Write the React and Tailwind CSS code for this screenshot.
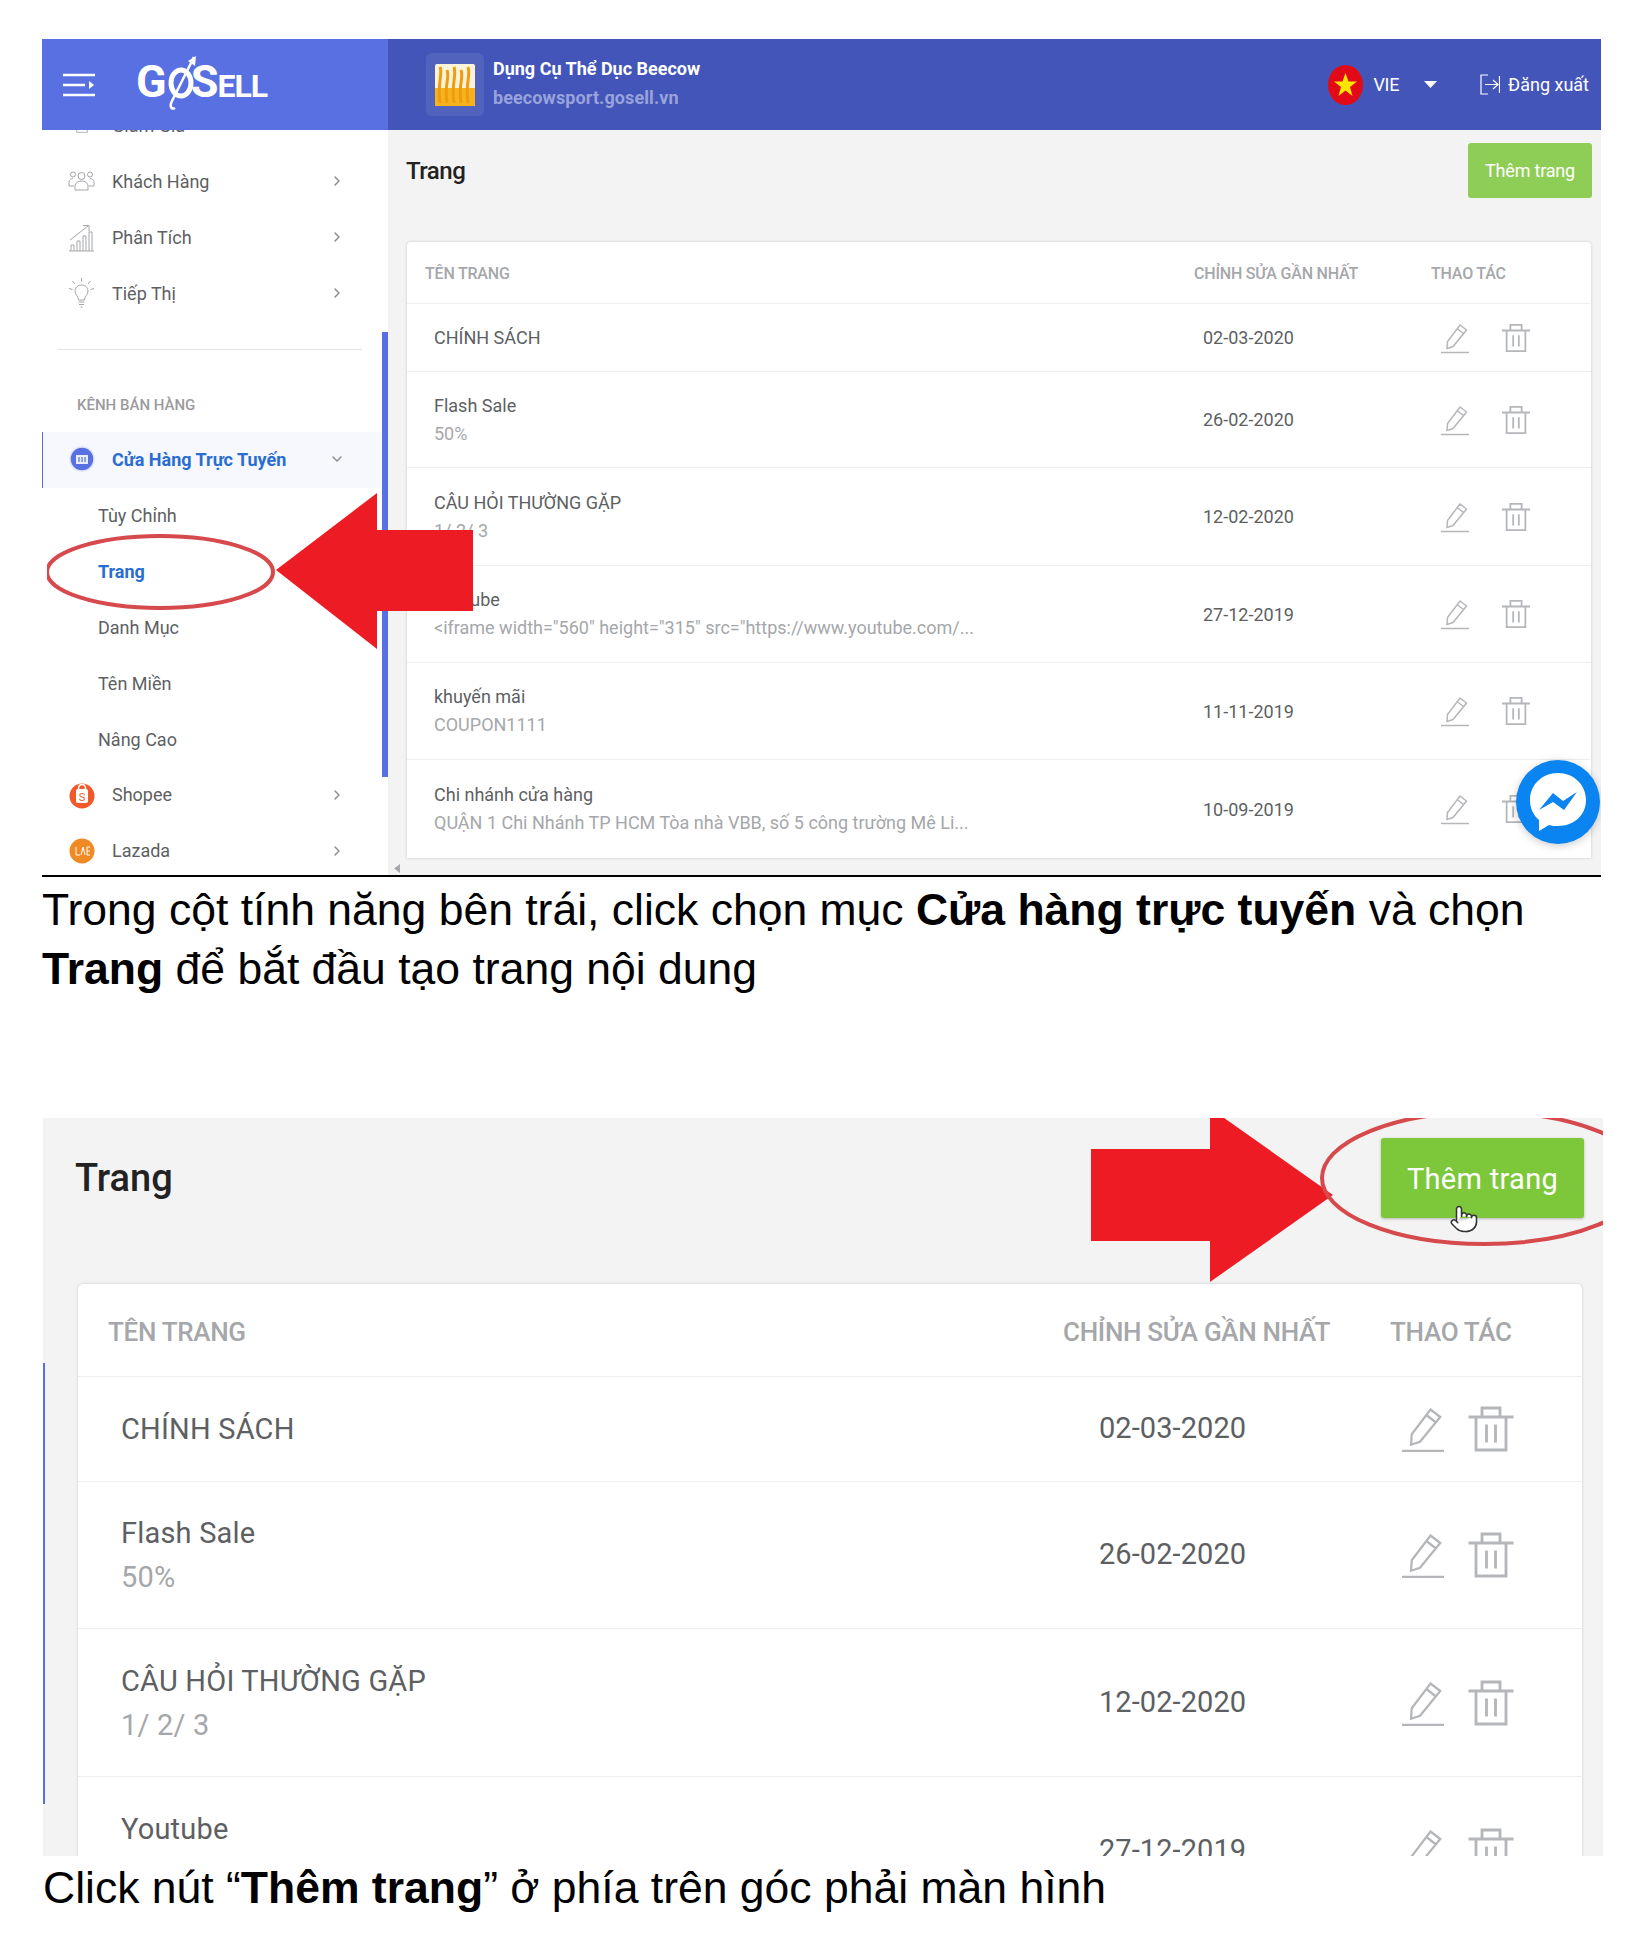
import { ChevronRight, ChevronDown, Pointer } from 'lucide-react';

const ROWS_TOP = [
  { name: 'CHÍNH SÁCH', sub: '', date: '02-03-2020', h: 'h-[68px]' },
  { name: 'Flash Sale', sub: '50%', date: '26-02-2020', h: 'h-[96px]' },
  { name: 'CÂU HỎI THƯỜNG GẶP', sub: '1/ 2/ 3', date: '12-02-2020', h: 'h-[98px]' },
  { name: 'Youtube', sub: '<iframe width="560" height="315" src="https://www.youtube.com/...', date: '27-12-2019', h: 'h-[97px]' },
  { name: 'khuyến mãi', sub: 'COUPON1111', date: '11-11-2019', h: 'h-[97px]' },
  { name: 'Chi nhánh cửa hàng', sub: 'QUẬN 1 Chi Nhánh TP HCM Tòa nhà VBB, số 5 công trường Mê Li...', date: '10-09-2019', h: 'h-[98px]' },
];

const ROWS_BOTTOM = [
  { name: 'CHÍNH SÁCH', sub: '', date: '02-03-2020', h: 'h-[105px]' },
  { name: 'Flash Sale', sub: '50%', date: '26-02-2020', h: 'h-[147px]' },
  { name: 'CÂU HỎI THƯỜNG GẶP', sub: '1/ 2/ 3', date: '12-02-2020', h: 'h-[148px]' },
  { name: 'Youtube', sub: '<iframe width="560" height="315"', date: '27-12-2019', h: 'h-[148px]' },
];

const SUB_MENU = ['Tùy Chỉnh', 'Trang', 'Danh Mục', 'Tên Miền', 'Nâng Cao'];

const PencilIcon = ({ className }) => (
  <svg className={className} viewBox="0 0 32 32" fill="none" stroke="#b4b6ba" strokeWidth="1.5">
    <path d="M21 3l6.500 5L14 24.500l-6 2 .5-7z" />
    <path d="M18 6.500l6.500 5" />
    <path d="M2 30.500h28" />
  </svg>
);

const TrashIcon = ({ className }) => (
  <svg className={className} viewBox="0 0 32 32" fill="none" stroke="#b4b6ba" strokeWidth="1.900">
    <path d="M1 8h30M10 8V2h12v6M6 8v22h20V8M13 13v12M19 13v12" />
  </svg>
);

const GroupIcon = ({ className }) => (
  <svg className={className} viewBox="0 0 27 22" fill="none" stroke="#a3a5a9" strokeWidth="1">
    <circle cx="13.500" cy="6" r="3.500" />
    <circle cx="5" cy="4.500" r="2.500" />
    <circle cx="22" cy="4.500" r="2.500" />
    <path d="M7 20v-4c0-3 3-5 6.500-5s6.500 2 6.500 5v4zM6 16H1v-4c0-2 2-3.500 4-3.500M21 16h5v-4c0-2-2-3.500-4-3.500" />
  </svg>
);

const ChartIcon = () => (
  <svg className="w-[27px] h-[29px]" viewBox="0 0 27 29" fill="none" stroke="#a3a5a9" strokeWidth="1">
    <path d="M1 28h25M3 28v-6h3v6M9 28v-10h3v10M15 28V13h3v15M21 28V9h3v19M2 17L20 3M15 2.500h6v6" />
  </svg>
);

const BulbIcon = () => (
  <svg className="w-[27px] h-[30px]" viewBox="0 0 27 30" fill="none" stroke="#a3a5a9" strokeWidth="1">
    <path d="M13.500 7c-4 0-6.500 3-6.500 6 0 4 3.500 5 3.500 9h6c0-4 3.500-5 3.500-9 0-3-2.500-6-6.500-6zM10.500 24h6M11 26.500h5M12.500 29h2" />
    <path d="M13.500 0v3.500M4.500 3l2.500 3M22.500 3L20 6M1 10.500l3.500 1M26 10.500l-3.500 1" />
  </svg>
);

const MenuRow = ({ icon, label, chevron = true }) => (
  <div className="h-[56px] flex items-center pl-[26px] pr-[43px] shrink-0">
    <div className="w-[27px] flex justify-center">{icon}</div>
    <span className="ml-[17px] flex-1 text-[18px] text-[#5d5f63]">{label}</span>
    {chevron && <ChevronRight size={16} strokeWidth={2.200} color="#8b8d91" />}
  </div>
);

const App = () => (
  <div className="relative bg-white h-[1955px] pt-[39px] font-['Roboto',sans-serif] overflow-hidden">
    {/* First screenshot */}
    <div className="relative ml-[42px] w-[1559px] h-[838px] overflow-hidden">
      <div className="flex h-[91px]">
        <div className="w-[346px] bg-[#5970e2] flex items-center pl-[21px]">
          <svg className="w-[32px] h-[24px]" viewBox="0 0 32 24" fill="none" stroke="#fff" strokeWidth="2.400">
            <path d="M0 2h32M0 12h22M0 22h32" />
            <path d="M26 8l5 4-5 4z" fill="#fff" stroke="none" />
          </svg>
          <div className="relative ml-[41px] -mt-[6px] flex items-baseline text-white font-bold leading-none">
            <span className="text-[45px]">G</span>
            <span className="w-[24px]" />
            <span className="text-[45px] tracking-[-1px]">S</span>
            <span className="text-[32px] tracking-[-1px]">ELL</span>
            <svg className="absolute left-[29px] -top-[4px] w-[32px] h-[56px]" viewBox="0 0 32 56" fill="none" stroke="#fff">
              <ellipse cx="16" cy="28" rx="10" ry="13" strokeWidth="5" />
              <path d="M29 2L7 46c-3 6 0 9 3 7" strokeWidth="2.500" />
              <path d="M23 6l8-5-1 10z" fill="#fff" stroke="none" />
            </svg>
          </div>
        </div>
        <div className="flex-1 bg-[#4355b8] flex items-center pl-[38px] pr-[12px]">
          <div className="w-[58px] h-[63px] rounded-md bg-[#5263bd] flex items-center justify-center">
            <svg className="w-[40px] h-[42px]" viewBox="0 0 40 42">
              <rect width="40" height="42" rx="2" fill="#fdf3d8" />
              <rect y="24" width="40" height="18" fill="#f6b31c" />
              <path d="M5 3c3 8-3 16 0 36M12 6c3 8-3 14 0 33M19 3c3 8-3 16 0 36M26 6c3 8-3 14 0 33M33 3c3 8-3 16 0 36" fill="none" stroke="#ee9c10" strokeWidth="3" />
            </svg>
          </div>
          <div className="ml-[9px] -mt-[2px] flex flex-col gap-[5px]">
            <span className="text-[18px] leading-[24px] font-bold text-white">Dụng Cụ Thể Dục Beecow</span>
            <span className="text-[18px] leading-[24px] font-bold tracking-[0.1px] text-[#98a3dc]">beecowsport.gosell.vn</span>
          </div>
          <div className="flex-1" />
          <svg className="w-[35px] h-[40px]" viewBox="0 0 35 40">
            <ellipse cx="17.500" cy="20" rx="17.500" ry="20" fill="#e30a17" />
            <path d="M17.500 8l3 8.500h8.500l-7 5.500 2.500 9-7-5.500-7 5.500 2.500-9-7-5.500h8.500z" fill="#ffe500" />
          </svg>
          <span className="ml-[10px] text-[18px] tracking-[-0.3px] text-white">VIE</span>
          <svg className="ml-[25px] w-[13px] h-[7px]" viewBox="0 0 13 7"><path d="M0 0h13L6.500 7z" fill="#fff" /></svg>
          <svg className="ml-[43px] w-[20px] h-[21px]" viewBox="0 0 20 21" fill="none" stroke="#fff" strokeWidth="1.200">
            <path d="M8 1H1v19h7M5 10.500h13M13 6l5 4.500-5 4.500M19.500 2v17" />
          </svg>
          <span className="ml-[8px] text-[18px] text-white">Đăng xuất</span>
        </div>
      </div>

      <div className="flex h-[747px]">
        <aside className="relative w-[346px] bg-white overflow-hidden shrink-0">
          <div className="-mt-[33px] flex flex-col">
            <MenuRow label="Giảm Giá" chevron={false} icon={<GroupIcon className="w-[22px] h-[20px]" />} />
            <MenuRow label="Khách Hàng" icon={<GroupIcon className="w-[27px] h-[22px]" />} />
            <MenuRow label="Phân Tích" icon={<ChartIcon />} />
            <MenuRow label="Tiếp Thị" icon={<BulbIcon />} />
            <div className="mt-[28px] ml-[16px] w-[304px] border-t border-[#e3e4e6]" />
            <div className="mt-[45px] pl-[35px] text-[15px] leading-[20px] font-medium text-[#9a9b9e]">KÊNH BÁN HÀNG</div>
            <div className="mt-[17px] h-[56px] pb-[2px] flex items-center pl-[25px] pr-[43px] bg-[#f6f8fe] border-l border-[#5970e2]">
              <div className="w-[27px] flex justify-center">
                <svg className="w-[26px] h-[26px]" viewBox="0 0 26 26">
                  <circle cx="13" cy="13" r="12" fill="#5970e2" stroke="#dfe4fa" strokeWidth="1.500" />
                  <path d="M7 9h12v9H7z" fill="#e9ecfb" />
                  <path d="M10 11v5M13 11v5M16 11v5" stroke="#5970e2" strokeWidth="1.200" />
                </svg>
              </div>
              <span className="ml-[17px] flex-1 text-[18px] font-bold text-[#2a6dd0]">Cửa Hàng Trực Tuyến</span>
              <ChevronDown size={16} strokeWidth={2.200} color="#8b8d91" />
            </div>
            {SUB_MENU.map((item) => (
              <div key={item} className="h-[55.8px] flex items-center pl-[56px] shrink-0">
                <span className={item === 'Trang' ? 'text-[18px] font-bold text-[#2a6dd0]' : 'text-[18px] text-[#5d5f63]'}>{item}</span>
              </div>
            ))}
            <MenuRow label="Shopee" icon={(
              <svg className="w-[26px] h-[30px]" viewBox="0 0 26 30">
                <circle cx="13" cy="16" r="12.500" fill="#f1592a" />
                <rect x="7" y="9" width="12" height="14" rx="2" fill="#fff" />
                <path d="M9.500 9c0-6 7-6 7 0" fill="none" stroke="#fff" strokeWidth="1.500" />
                <text x="13" y="21" textAnchor="middle" fontSize="11" fill="#f1592a">S</text>
              </svg>
            )} />
            <MenuRow label="Lazada" icon={(
              <svg className="w-[26px] h-[26px]" viewBox="0 0 26 26">
                <circle cx="13" cy="13" r="12.500" fill="#f08a24" />
                <path d="M7 9v8h4M14 9l-2 8M14 9l2 8M21 9h-3v8h3M18 13h3" fill="none" stroke="#fff" strokeWidth="1" />
              </svg>
            )} />
          </div>
          <div className="absolute right-0 top-[202px] w-[6px] h-[445px] bg-[#5970e2]" />
        </aside>

        <main className="relative flex-1 bg-[#f3f3f3] pl-[18px] pr-[9px]">
          <div className="flex items-center justify-between pt-[13px]">
            <h1 className="text-[24px] font-medium tracking-[-0.5px] text-[#222]">Trang</h1>
            <button className="w-[124px] h-[55px] rounded-[3px] bg-[#8fce56] text-[18px] tracking-[-0.2px] text-white">Thêm trang</button>
          </div>
          <div className="mt-[44px] ml-[1px] w-[1184px] bg-white rounded-t-[4px] shadow-[0_0_3px_rgba(0,0,0,0.18)]">
            <div className="flex items-center h-[62px] pt-[2px] border-b border-[#eeeeee] text-[16px] font-medium tracking-[-0.2px] text-[#a5a7aa]">
              <div className="flex-1 pl-[18px]">TÊN TRANG</div>
              <div className="w-[237px]">CHỈNH SỬA GẦN NHẤT</div>
              <div className="w-[160px]">THAO TÁC</div>
            </div>
            {ROWS_TOP.map((row, i) => (
              <div key={row.date} className={`flex items-center ${row.h} ${i < 5 ? 'border-b border-[#eeeeee]' : ''}`}>
                <div className="flex-1 pl-[27px] text-[18px] leading-[28px] text-[#5d5f63]">
                  <div>{row.name}</div>
                  {row.sub && <div className="text-[#a5a7aa]">{row.sub}</div>}
                </div>
                <div className="w-[237px] pl-[9px] text-[18px] text-[#5d5f63]">{row.date}</div>
                <div className="w-[160px] flex items-center pl-[8px] gap-[30px]">
                  <PencilIcon className="w-[32px] h-[32px]" />
                  <TrashIcon className="w-[30px] h-[30px]" />
                </div>
              </div>
            ))}
          </div>
          <svg className="absolute left-[6px] bottom-[4px] w-[6px] h-[9px]" viewBox="0 0 6 9"><path d="M6 0v9L0 4.500z" fill="#a5a7aa" /></svg>
        </main>
      </div>

      {/* Annotations drawn over the screenshot */}
      <div className="absolute left-[1474px] top-[721px] w-[84px] h-[84px] rounded-full bg-[#0a84f0] flex items-center justify-center shadow-[0_2px_8px_rgba(0,0,0,0.2)]">
        <svg className="w-[58px] h-[60px]" viewBox="0 0 58 60">
          <path d="M29 1C13 1 1 13 1 28c0 8 3 15 9 20v11l10-6c3 1 6 1 9 1 16 0 28-11 28-26S45 1 29 1z" fill="#fff" />
          <path d="M10 38l14-17 10 8 14-9-13 18-11-8z" fill="#0a84f0" />
        </svg>
      </div>
      <svg className="absolute left-[5px] top-[495px] w-[240px] h-[76px]" viewBox="0 0 240 76" fill="none">
        <ellipse cx="113" cy="38" rx="113" ry="36" stroke="#d6494c" strokeWidth="4" />
      </svg>
      <svg className="absolute left-[234px] top-[454px] w-[200px] h-[156px]" viewBox="0 0 200 156">
        <path d="M0 77L101 0v37h96v81h-96v38z" fill="#ed1c24" />
      </svg>
      <div className="absolute left-0 bottom-0 w-full h-[2px] bg-black" />
    </div>

    <p className="mt-[3px] ml-[42px] w-[1559px] font-['Liberation_Sans',sans-serif] text-[44.500px] leading-[59px] text-black">
      Trong cột tính năng bên trái, click chọn mục <b>Cửa hàng trực tuyến</b> và chọn <b>Trang</b> để bắt đầu tạo trang nội dung
    </p>

    {/* Second screenshot */}
    <div className="relative mt-[120px] ml-[43px] w-[1560px] h-[738px] bg-[#f3f3f3] overflow-hidden">
      <div className="flex items-center justify-between pt-[20px] pl-[32px] pr-[19px]">
        <h2 className="text-[38px] font-medium text-[#222]">Trang</h2>
        <button className="w-[203px] h-[80px] pt-[3px] rounded-[3px] bg-[#7cc83a] text-[29px] tracking-[0.3px] text-white shadow-[0_1px_3px_rgba(0,0,0,0.25)]">Thêm trang</button>
      </div>
      <div className="mt-[66px] ml-[35px] w-[1504px] bg-white rounded-t-[5px] shadow-[0_0_3px_rgba(0,0,0,0.18)]">
        <div className="flex items-center h-[93px] pt-[4px] border-b border-[#eeeeee] text-[26px] font-medium tracking-[-0.3px] text-[#a5a7aa]">
          <div className="flex-1 pl-[30px]">TÊN TRANG</div>
          <div className="w-[327px]">CHỈNH SỬA GẦN NHẤT</div>
          <div className="w-[192px]">THAO TÁC</div>
        </div>
        {ROWS_BOTTOM.map((row, i) => (
          <div key={row.date} className={`flex items-center ${row.h} ${i < 3 ? 'border-b border-[#eeeeee]' : ''}`}>
            <div className="flex-1 pl-[43px] text-[29px] leading-[44px] tracking-[0.2px] text-[#5d5f63]">
              <div>{row.name}</div>
              {row.sub && <div className="text-[#a5a7aa]">{row.sub}</div>}
            </div>
            <div className="w-[327px] pl-[36px] text-[29px] tracking-[0.07px] text-[#5d5f63]">{row.date}</div>
            <div className="w-[192px] flex items-center pl-[9px] gap-[20px]">
              <PencilIcon className="w-[48px] h-[48px]" />
              <TrashIcon className="w-[48px] h-[48px]" />
            </div>
          </div>
        ))}
      </div>
      <div className="absolute left-0 top-[245px] w-[2px] h-[441px] bg-[#5970e2]" />
      <svg className="absolute left-[1048px] top-[-10px] w-[244px] h-[174px]" viewBox="0 0 244 174">
        <path d="M0 41h119V0l123 87-123 87v-41H0z" fill="#ed1c24" />
      </svg>
      <svg className="absolute left-[1277px] top-[-8px] w-[330px] h-[136px]" viewBox="0 0 330 136" fill="none">
        <ellipse cx="164" cy="68" rx="162" ry="66" stroke="#d6494c" strokeWidth="4" />
      </svg>
      <Pointer className="absolute left-[1406px] top-[86px]" size={30} strokeWidth={1.200} color="#333" fill="#fff" />
    </div>

    <p className="mt-[2px] ml-[43px] font-['Liberation_Sans',sans-serif] text-[44.500px] leading-[59px] text-black">
      Click nút “<b>Thêm trang</b>” ở phía trên góc phải màn hình
    </p>
  </div>
);

export default App;
